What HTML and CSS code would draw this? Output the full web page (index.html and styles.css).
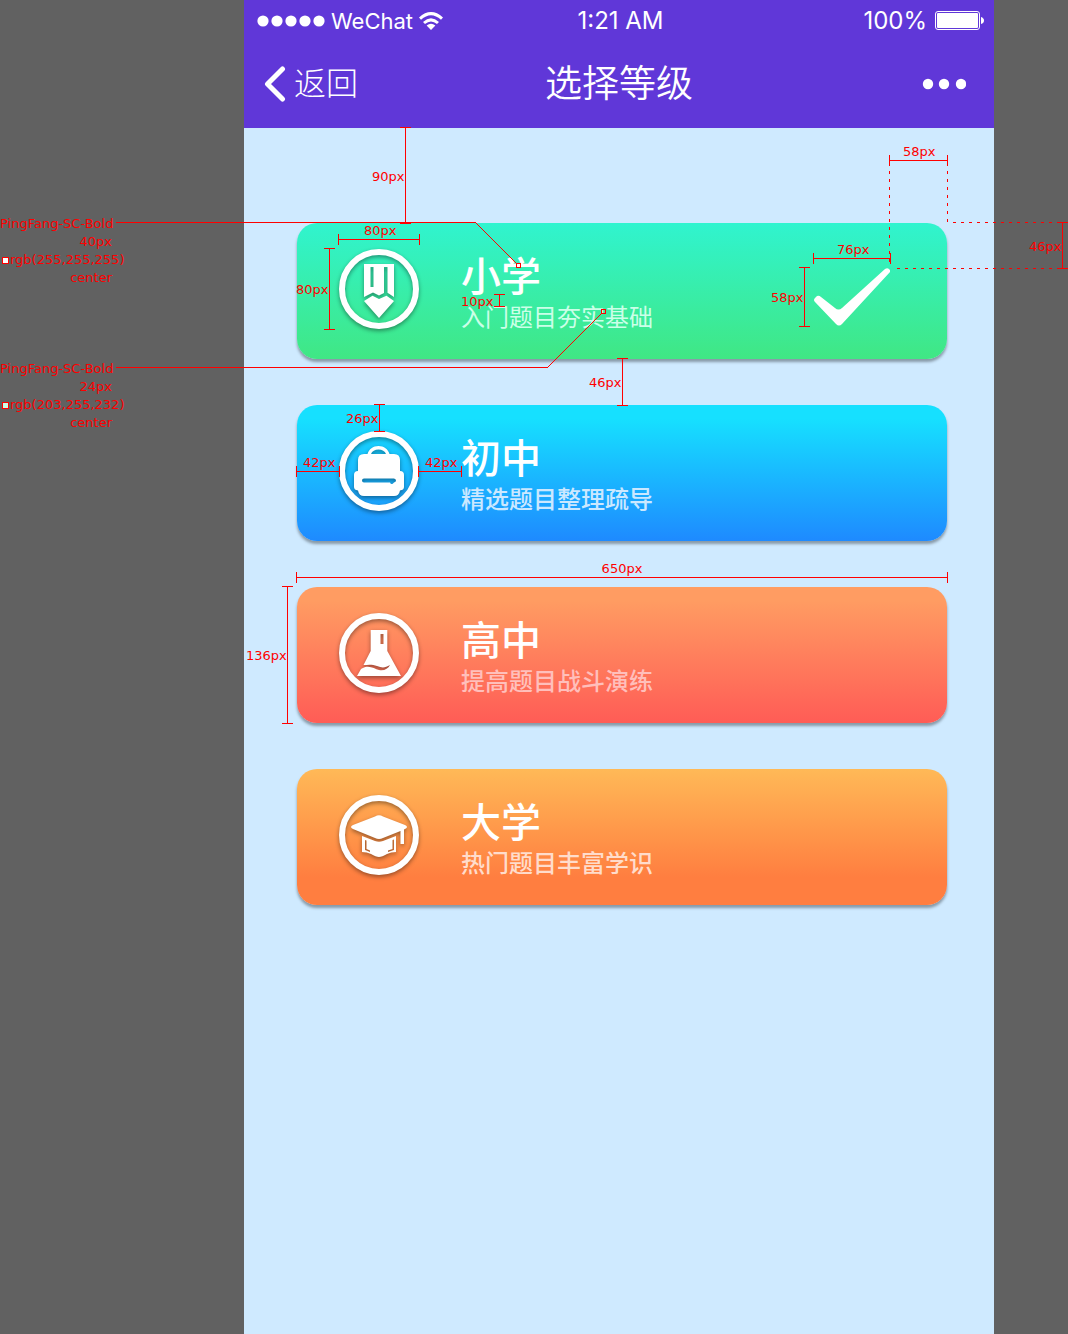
FILE: index.html
```html
<!DOCTYPE html>
<html lang="zh-CN">
<head>
<meta charset="utf-8">
<meta name="viewport" content="width=device-width, initial-scale=1">
<title>选择等级</title>
<link rel="stylesheet" href="styles.css">
</head>
<body>
<div class="board">
  <aside class="notes">
    <div class="note">
      <p>PingFang-SC-Bold</p>
      <p>40px</p>
      <p class="note-color"><i class="swatch swatch-white"></i>rgb(255,255,255)</p>
      <p>center</p>
    </div>
    <div class="note">
      <p>PingFang-SC-Bold</p>
      <p>24px</p>
      <p class="note-color"><i class="swatch swatch-mint"></i>rgb(203,255,232)</p>
      <p>center</p>
    </div>
  </aside>

  <div class="phone">
    <header class="top">
      <div class="status">
        <div class="status-left">
          <svg width="68" height="12" viewBox="0 0 68 12" fill="#fff" aria-hidden="true"><circle cx="6" cy="6" r="5.6"/><circle cx="20" cy="6" r="5.6"/><circle cx="34" cy="6" r="5.6"/><circle cx="48" cy="6" r="5.6"/><circle cx="62" cy="6" r="5.6"/></svg>
          <span class="carrier">WeChat</span>
          <svg width="24" height="18" viewBox="0 0 24 18" fill="none" stroke="#fff" stroke-width="3" aria-hidden="true"><path d="M1 6.6Q12-3.4 23 6.6M5 11Q12 4.800 19 11"/><path d="M12 18L7.600 13.600Q12 10 16.400 13.600Z" fill="#fff" stroke="none"/></svg>
        </div>
        <span class="clock">1:21 AM</span>
        <div class="status-right">
          <span>100%</span>
          <svg width="49" height="19" viewBox="0 0 49 19" aria-hidden="true"><rect x=".5" y=".5" width="44" height="18" rx="2.500" fill="none" stroke="#fff"/><rect x="2" y="2" width="41" height="15" rx="1" fill="#fff"/><path d="M46 6Q49 7 49 9.500T46 13Z" fill="#fff"/></svg>
        </div>
      </div>
      <nav class="bar">
        <a class="back" href="#">
          <svg width="22" height="36" viewBox="0 0 22 36" fill="none" stroke="#fff" stroke-width="5" stroke-linecap="round" stroke-linejoin="round" aria-hidden="true"><path d="M18.500 3L3.500 18L18.500 33"/></svg>
          <span class="back-label">返回</span>
        </a>
        <h1 class="heading">选择等级</h1>
        <button class="more" type="button" aria-label="更多">
          <svg width="44" height="12" viewBox="0 0 44 12" fill="#fff" aria-hidden="true"><circle cx="6" cy="6" r="5.200"/><circle cx="22" cy="6" r="5.200"/><circle cx="39" cy="6" r="5.200"/></svg>
        </button>
      </nav>
    </header>

    <main class="levels">
      <button class="card card-green" type="button" aria-pressed="true">
        <svg class="icon" viewBox="0 0 80 80" aria-hidden="true"><circle cx="40" cy="40" r="37" fill="none" stroke="#fff" stroke-width="6"/><path fill="#fff" fill-rule="evenodd" d="M25 15H55V48L48.500 43.800V18H45V44L40 46.500L34 43.500L25 48ZM31.500 18V38H34.500V18ZM25 52L33.500 46.800L40 50L47.500 46.800L55 52L40 69Z"/></svg>
        <span class="text"><strong class="name">小学</strong><span class="desc">入门题目夯实基础</span></span>
        <svg class="check" viewBox="0 0 76 58" aria-hidden="true"><path fill="#fff" d="M1 34Q-1 32 1 30L3 28Q5 27 7 29L21 40Q24.500 43 28 40L71 1Q74-1 76 2V4L28 56Q25 59 22 56Z"/></svg>
      </button>

      <button class="card card-blue" type="button">
        <svg class="icon" viewBox="0 0 80 80" aria-hidden="true"><circle cx="40" cy="40" r="37" fill="none" stroke="#fff" stroke-width="6"/><path fill="#fff" fill-rule="evenodd" d="M28.500 23C30 18 34 15 39.500 15S49 18 50.500 23H55Q61 23 61 29V40Q65 40 65 44V56Q65 59 61 59.500Q60 65 55 65H25Q20 65 19 59.500Q15 59 15 56V44Q15 40 19 40V29Q19 23 25 23ZM32 23H47C46 20 43 18.500 39.500 18.500S33 20 32 23ZM25 47.500Q23 47.500 23 49.500T25 51.500H51Q52 54 54 52.500L55 51.500Q57 51 57 49.500T55 47.500Z"/></svg>
        <span class="text"><strong class="name">初中</strong><span class="desc">精选题目整理疏导</span></span>
      </button>

      <button class="card card-coral" type="button">
        <svg class="icon" viewBox="0 0 80 80" aria-hidden="true"><circle cx="40" cy="40" r="37" fill="none" stroke="#fff" stroke-width="6"/><path fill="#fff" fill-rule="evenodd" d="M31.700 17H48.300V38L62 63H18L22 56C30 51 35 56 40 57C45 58 49 56 51 52C46 55 43 55 38 53C33 51 28 52 24.500 52L31.700 38ZM41.500 21V31H44.500V21Z"/></svg>
        <span class="text"><strong class="name">高中</strong><span class="desc">提高题目战斗演练</span></span>
      </button>

      <button class="card card-orange" type="button">
        <svg class="icon" viewBox="0 0 80 80" aria-hidden="true"><circle cx="40" cy="40" r="37" fill="none" stroke="#fff" stroke-width="6"/><path fill="#fff" d="M36 21.500Q40 19 44 21.500L66 30Q70 32 66 34L65 34.500V49H61.500V36L44 43Q40 45 36 43L14 34Q10 32 14 30Z"/><path fill="#fff" fill-rule="evenodd" d="M23 41L36 46Q40 47.500 44 46L57 41V57Q52 57 48 59Q43 62 40 62T32 59Q28 57 23 57ZM26 45V55L31 57V55.500L27.500 54V45.500ZM53.500 45V54L49 55.500V57L55 55V44.500Z"/></svg>
        <span class="text"><strong class="name">大学</strong><span class="desc">热门题目丰富学识</span></span>
      </button>
    </main>
  </div>

  <svg class="measure measure-left" width="660" height="740" viewBox="0 0 660 740" role="group" aria-label="标注">
    <g class="lines" transform="translate(.5 .5)">
      <path d="M405 127V223M400 127H410M400 223H410"/>
      <path d="M116 222H475M116 367H547"/>
      <path class="slant" d="M475 222L516 263M547 367L601 313"/>
      <path d="M516 263H520V267H516ZM601 309H605V313H601Z"/>
      <path d="M338 239H419M338 234V244M419 234V244"/>
      <path d="M329 248V329M324 248H334M324 329H334"/>
      <path d="M499 294V306M494 294H504M494 306H504"/>
      <path d="M622 358V405M617 358H627M617 405H627"/>
      <path d="M379 404V431M374 404H384M374 431H384"/>
      <path d="M296 471H339M296 466V476M339 466V476"/>
      <path d="M418 471H461M418 466V476M461 466V476"/>
      <path d="M287 586V723M282 586H292M282 723H292"/>
    </g>
    <text x="372" y="181">90px</text>
    <text x="364" y="235">80px</text>
    <text x="296" y="294">80px</text>
    <text x="461" y="306">10px</text>
    <text x="589" y="387">46px</text>
    <text x="346" y="423">26px</text>
    <text x="303" y="467">42px</text>
    <text x="425" y="467">42px</text>
    <text x="246" y="660">136px</text>
  </svg>

  <svg class="measure measure-wide" width="100%" height="24" role="group" aria-label="卡片宽度"><text x="50%" y="13" text-anchor="middle">650px</text><path d="M0 12h1v11h-1z"/><rect x="0" y="17" width="100%" height="1"/><svg x="100%" overflow="visible"><path d="M-1 12h1v11h-1z"/></svg></svg>

  <svg class="measure measure-right" width="308" height="340" viewBox="760 0 308 340" role="group" aria-label="标注">
    <g class="lines" transform="translate(.5 .5)">
      <path d="M889 160H947M889 155V165M947 155V165"/>
      <path d="M813 258H890M813 253V263M890 253V263"/>
      <path d="M804 267V326M799 267H809M799 326H809"/>
      <path d="M1062 222V268M1057 222H1067M1057 268H1067"/>
    </g>
    <g class="lines dashed">
      <path d="M889.500 171V262M947.500 171V222M953 222.500H1057M897 268.500H1057"/>
    </g>
    <text x="903" y="156">58px</text>
    <text x="837" y="254">76px</text>
    <text x="771" y="302">58px</text>
    <text x="1029" y="251">46px</text>
  </svg>
</div>
</body>
</html>
```
FILE: styles.css
```css
* {
  box-sizing: border-box;
}

body {
  margin: 0;
  background: #616161;
  font-family: "Noto Sans CJK SC", sans-serif;
}

.board {
  position: relative;
  display: grid;
  grid-template-columns: 244px minmax(0, 1fr) 74px;
  min-height: 100vh;
}

/* Type notes in the left gutter */
.notes {
  display: flex;
  flex-direction: column;
  gap: 73px;
  width: 123px;
  padding-top: 215px;
  color: #f00;
  font: 13px/18px "DejaVu Sans", Verdana, sans-serif;
}

.note p {
  margin: 0;
  padding-right: 11px;
  text-align: right;
  white-space: nowrap;
}

.note .note-color {
  display: flex;
  align-items: center;
  gap: 1px;
  padding: 0 0 0 2px;
}

.swatch {
  flex: none;
  width: 7px;
  height: 7px;
  border: 1px solid #f00;
}

.swatch-white {
  background: #fff;
}

.swatch-mint {
  background: #cbffe8;
}

/* Phone screen */
.phone {
  background: #cfeaff;
}

.top {
  height: 128px;
  background: #6037d8;
  color: #fff;
}

.status,
.bar {
  display: grid;
  grid-template-columns: 1fr auto 1fr;
  align-items: center;
}

.status {
  height: 41px;
  padding: 0 10px 0 13px;
  font: 24px/30px Inter, sans-serif;
}

.status-left,
.status-right {
  display: flex;
  align-items: center;
  gap: 6px;
}

.status-right {
  justify-content: flex-end;
  gap: 8px;
}

.carrier {
  font-size: 22px;
}

.bar {
  height: 86px;
  padding: 0 20px;
}

.back {
  display: flex;
  align-items: center;
  gap: 8px;
  color: inherit;
  font-size: 32px;
  font-weight: 300;
  line-height: 40px;
  text-decoration: none;
}

.back-label,
.heading {
  padding-bottom: 6px;
}

.heading {
  margin: 0;
  font-size: 37px;
  font-weight: 350;
  line-height: 44px;
}

.more {
  display: flex;
  justify-self: end;
  padding: 0 8px 0 0;
  border: 0;
  background: none;
}

/* Level cards */
.levels {
  display: flex;
  flex-direction: column;
  gap: 46px;
  padding: 95px 47px 46px 53px;
}

.card {
  display: flex;
  align-items: flex-start;
  gap: 42px;
  min-height: 136px;
  padding: 26px 57px 0 42px;
  border: 0;
  border-radius: 20px;
  box-shadow: 0 3px 3px rgba(0, 0, 0, 0.35);
  color: #fff;
  font-family: inherit;
  text-align: left;
}

.card-green {
  background: linear-gradient(#30f4cf, #40e784);
}

.card-blue {
  background: linear-gradient(#16e0ff 10%, #1e8aff);
}

.card-coral {
  background: linear-gradient(#ff9c62 10%, #ff5c56);
}

.card-orange {
  background: linear-gradient(#ffb957, #ff7e40 80%);
}

.icon {
  flex: none;
  width: 80px;
  height: 80px;
  filter: drop-shadow(0 2px 2px rgba(0, 0, 0, 0.4));
}

.text {
  display: flex;
  flex-direction: column;
  gap: 10px;
  padding-top: 5px;
}

.name {
  font-size: 40px;
  font-weight: 500;
  line-height: 40px;
}

.desc {
  font-size: 24px;
  font-weight: 500;
  line-height: 24px;
}

.card-green .desc {
  color: #cbffe8;
  font-weight: 400;
}

.card-blue .desc {
  color: #cbe8ff;
}

.card-coral .desc {
  color: #ffbfbb;
}

.card-orange .desc {
  color: #ffdccb;
}

.check {
  width: 76px;
  height: 58px;
  margin: 19px 0 0 auto;
}

/* Measurement overlay */
.measure {
  position: absolute;
  top: 0;
  overflow: visible;
  pointer-events: none;
  fill: #f00;
  font: 13px "DejaVu Sans", Verdana, sans-serif;
}

.measure-left {
  left: 0;
}

.measure-right {
  right: 0;
}

.measure-wide {
  top: 560px;
  left: 296px;
  width: calc(100% - 416px);
}

.lines {
  fill: none;
  stroke: #f00;
  stroke-linecap: square;
  shape-rendering: crispEdges;
}

.slant {
  shape-rendering: auto;
}

.dashed {
  stroke-dasharray: 3 5;
  stroke-linecap: butt;
}
```
